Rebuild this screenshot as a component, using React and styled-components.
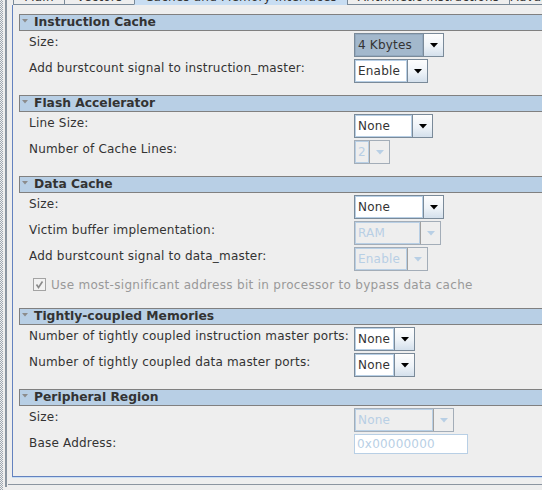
import React from 'react';
import styled, { createGlobalStyle } from 'styled-components';

const GlobalStyle = createGlobalStyle`
  html, body {
    margin: 0;
    padding: 0;
    background: #eeeeee;
    overflow: hidden;
  }

  body {
    font-family: "DejaVu Sans", "Liberation Sans", sans-serif;
    font-size: 12px;
    color: #333333;
  }
`;

const Frame = styled.div`
  display: flex;
  width: 542px;
  height: 490px;
  overflow: hidden;
`;

const Dots = styled.div`
  flex: 0 0 3px;
  background: repeating-conic-gradient(#9ea7b1 0 25%, transparent 0 50%) 0 0 / 2px 2px;
`;

const Divider = styled.div`
  flex: 0 0 2px;
  height: 487px;
  margin-left: 2px;
  background: #8b95a0;
`;

const Panel = styled.div`
  flex: 1;
  min-width: 0;
  height: 485px;
  box-sizing: border-box;
  margin-left: 1px;
  padding-left: 4px;
  border-bottom: 1px solid #8b95a0;
`;

const TabStrip = styled.div`
  display: flex;
  align-items: flex-end;
  height: 5px;
  padding-left: 1px;
  overflow: hidden;
`;

const Tab = styled.div`
  flex: 0 0 ${props => props.$width}px;
  height: 20px;
  box-sizing: border-box;
  padding-top: 5px;
  border-left: 1px solid #7a8a99;
  border-bottom: 1px solid ${props => (props.$selected ? 'transparent' : '#7a8a99')};
  background: ${props => (props.$selected ? '#c8ddf2' : '#eeeeee')};
  line-height: 14px;
  letter-spacing: 0.2px;
  text-align: center;
  white-space: nowrap;
  overflow: hidden;
`;

const Pane = styled.div`
  display: flex;
  flex-direction: column;
  gap: 12px;
  padding: 9px 0 22px 6px;
  border-left: 1px solid #6382bf;
  border-bottom: 1px solid #6382bf;
  box-shadow: 0 1px 0 #c8ddf2;
`;

const Section = styled.div`
  display: flex;
  flex-direction: column;
`;

const Header = styled.div`
  display: flex;
  align-items: center;
  gap: 6px;
  height: 17px;
  box-sizing: border-box;
  padding-left: 2px;
  border: 1px solid #808080;
  border-right: none;
  background: #b8cfe5;
  font-size: 12.3px;
  font-weight: bold;
  line-height: 15px;
  white-space: nowrap;
`;

const Triangle = styled.svg`
  flex-shrink: 0;
  align-self: flex-start;
  margin-top: 4px;
`;

const Row = styled.div`
  display: flex;
  align-items: flex-start;
  height: ${props => props.$height || 24}px;
  margin-top: 2px;
  padding-left: 10px;
`;

const Label = styled.div`
  flex: 0 0 325px;
  padding-top: 2px;
  line-height: 14px;
  letter-spacing: 0.2px;
  white-space: nowrap;
`;

const Combo = styled.div`
  display: flex;
  width: ${props => props.$width}px;
  height: 24px;
  box-sizing: border-box;
  border: 1px solid ${props => (props.$disabled ? '#a3adb8' : '#7a8a99')};
`;

const ComboValue = styled.div`
  flex: 1;
  min-width: 0;
  padding-left: 3px;
  line-height: 22px;
  letter-spacing: 0.2px;
  white-space: nowrap;
  overflow: hidden;
  color: ${props => (props.$disabled ? '#b8cfe5' : '#333333')};
  background: ${props =>
    props.$focused ? '#a3b8cc' : props.$disabled ? '#eeeeee' : '#ffffff'};
  box-shadow: inset 0 0 0 1px
    ${props => (props.$focused ? '#93a9bf' : '#b8cfe5')};
`;

const ComboButton = styled.div`
  display: flex;
  flex: 0 0 19px;
  align-items: center;
  justify-content: center;
  border-left: 1px solid ${props => (props.$disabled ? '#a0a0a0' : '#7a8a99')};
  background: ${props =>
    props.$disabled
      ? '#eeeeee'
      : 'linear-gradient(#fdfdfd, #eef3f8 55%, #d4e0ec)'};
`;

const TextField = styled.div`
  width: 114px;
  height: 20px;
  box-sizing: border-box;
  padding-left: 2px;
  border: 1px solid #b8cfe5;
  background: #ffffff;
  color: #b8cfe5;
  line-height: 18px;
  letter-spacing: 0.2px;
`;

const CheckRow = styled.div`
  display: flex;
  align-items: center;
  gap: 5px;
  height: 23px;
  margin-top: 2px;
  padding-left: 14px;
  color: #999999;
  line-height: 14px;
  letter-spacing: 0.3px;
  white-space: nowrap;
`;

const tabs = [
  { label: 'Main', width: 51 },
  { label: 'Vectors', width: 70 },
  { label: 'Caches and Memory Interfaces', width: 213, selected: true },
  { label: 'Arithmetic Instructions', width: 162 },
  { label: 'Advanced Features', width: 120 },
];

const sections = [
  {
    title: 'Instruction Cache',
    rows: [
      { label: 'Size:', combo: { value: '4 Kbytes', width: 90, focused: true } },
      { label: 'Add burstcount signal to instruction_master:', combo: { value: 'Enable', width: 74 } },
    ],
  },
  {
    title: 'Flash Accelerator',
    rows: [
      { label: 'Line Size:', combo: { value: 'None', width: 79 } },
      { label: 'Number of Cache Lines:', combo: { value: '2', width: 36, disabled: true } },
    ],
  },
  {
    title: 'Data Cache',
    rows: [
      { label: 'Size:', combo: { value: 'None', width: 90 } },
      { label: 'Victim buffer implementation:', combo: { value: 'RAM', width: 87, disabled: true } },
      { label: 'Add burstcount signal to data_master:', combo: { value: 'Enable', width: 74, disabled: true } },
      { check: 'Use most-significant address bit in processor to bypass data cache' },
    ],
  },
  {
    title: 'Tightly-coupled Memories',
    rows: [
      { label: 'Number of tightly coupled instruction master ports:', combo: { value: 'None', width: 61 } },
      { label: 'Number of tightly coupled data master ports:', combo: { value: 'None', width: 61 } },
    ],
  },
  {
    title: 'Peripheral Region',
    rows: [
      { label: 'Size:', combo: { value: 'None', width: 100, disabled: true } },
      { label: 'Base Address:', field: '0x00000000' },
    ],
  },
];

function ComboBox({ value, width, disabled, focused }) {
  return (
    <Combo $width={width} $disabled={disabled}>
      <ComboValue $disabled={disabled} $focused={focused}>
        {value}
      </ComboValue>
      <ComboButton $disabled={disabled}>
        <svg width="8" height="5" viewBox="0 0 8 5">
          <polygon points="0,0 8,0 4,4.5" fill={disabled ? '#b8cfe5' : '#000000'} />
        </svg>
      </ComboButton>
    </Combo>
  );
}

function CheckBox() {
  return (
    <svg width="13" height="13" viewBox="0 0 13 13">
      <rect x="0.5" y="0.5" width="12" height="12" fill="#f2f2f2" stroke="#a3a3a3" />
      <path d="M3.5 6.5 L5.5 9.5 L9.5 3.5" fill="none" stroke="#8a8a8a" strokeWidth="1.6" />
    </svg>
  );
}

function SettingsRow({ row }) {
  if (row.check) {
    return (
      <CheckRow>
        <CheckBox />
        {row.check}
      </CheckRow>
    );
  }

  return (
    <Row $height={row.field ? 20 : 24}>
      <Label>{row.label}</Label>
      {row.field ? <TextField>{row.field}</TextField> : <ComboBox {...row.combo} />}
    </Row>
  );
}

export default function App() {
  return (
    <>
      <GlobalStyle />
      <Frame>
        <Dots />
        <Divider />
        <Panel>
          <TabStrip>
            {tabs.map(tab => (
              <Tab key={tab.label} $width={tab.width} $selected={tab.selected}>
                {tab.label}
              </Tab>
            ))}
          </TabStrip>
          <Pane>
            {sections.map(section => (
              <Section key={section.title}>
                <Header>
                  <Triangle width="6" height="4" viewBox="0 0 6 4">
                    <polygon points="0,0 6,0 3,3.5" fill="#8c8c8c" />
                  </Triangle>
                  {section.title}
                </Header>
                {section.rows.map((row, i) => (
                  <SettingsRow key={i} row={row} />
                ))}
              </Section>
            ))}
          </Pane>
        </Panel>
      </Frame>
    </>
  );
}
